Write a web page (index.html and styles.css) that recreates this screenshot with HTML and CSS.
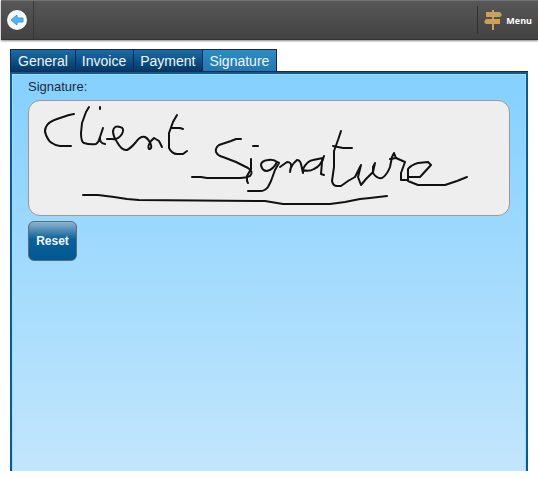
FILE: index.html
```html
<!DOCTYPE html>
<html lang="en">
  <head>
    <meta charset="utf-8" />
    <title>Client Signature</title>
    <meta name="viewport" content="width=device-width, initial-scale=1" />
    <link rel="stylesheet" href="styles.css">
  </head>

  <body>
    <header class="toolbar">
      <button type="button" class="back" aria-label="Back">
        <svg width="20" height="20" viewBox="0 0 20 20">
          <circle cx="10" cy="10" r="10" fill="#f4f8f8" />
          <path d="M4 10 L10 5 V8 H16 V12 H10 V15 Z" fill="#52b4f4" stroke="#3a9be8" stroke-width="1" stroke-linejoin="round" />
        </svg>
      </button>
      <button type="button" class="menu">
        <svg width="18" height="20" viewBox="0 0 18 20">
          <g fill="#cda05a">
            <path d="M8 0 H10 V20 H8 Z" />
            <path d="M2 2 H16 L18 5 L16 7 H2 Z" />
            <path d="M2 9 H16 V14 H2 L0 12 Z" />
          </g>
        </svg>
        Menu
      </button>
    </header>

    <main>
      <nav class="tabs">
        <a href="#general">General</a>
        <a href="#invoice">Invoice</a>
        <a href="#payment">Payment</a>
        <a href="#signature" class="active">Signature</a>
      </nav>

      <section class="panel" id="signature">
        <h2>Signature:</h2>
        <div class="pad">
          <svg viewBox="29 101 480 114" role="img" aria-label="Handwritten client signature">
            <g class="ink">
              <!-- Client -->
              <path d="M74 114 L69 115 L57 119 Q48 122 46 127 Q44 131 46 135 Q49 142 52 143 Q56 146 60 146 H71" />
              <path d="M89 107 L86 112 L82 123 L81 133 Q81 142 84 143 Q90 145 96 144 Q99 142 100 137 L103 128 L100 137 Q99 143 105 144" />
              <path d="M100 107 V109" />
              <path d="M107 139 H112 Q118 140 122 134 Q125 128 120 127 Q114 125 113 131 Q113 136 117 142 Q122 151 127 150 Q131 148 136 142 Q140 136 145 137 Q149 139 151 145 Q152 149 149 149 Q147 147 151 141 L154 138 L159 141 L162 147" />
              <path d="M177 115 L173 122 L169 133 V148 Q172 154 177 154 H183 L187 151" />
              <path d="M172 128 H180 L183 129" />
              <!-- Signature -->
              <path d="M241 139 H236 L231 141 L219 145 Q215 148 216 152 Q218 156 223 157 L236 162 L248 168 Q254 172 250 176 Q246 178 240 178 H207 L201 177 H192" />
              <path d="M251 159 V169 L247 176 V181 L248 183" />
              <path d="M253 146 H258" />
              <path d="M277 162 Q274 159 268 160 Q261 161 261 165 Q262 171 267 171 Q273 170 277 162 L279 163 L275 170 L271 181 L268 187 Q265 191 260 191 H248" />
              <path d="M280 167 L287 162 Q292 162 291 167 L290 172 Q290 166 297 160 Q300 160 301 164 L303 173 L303 169 Q307 161 313 160 L323 158 Q321 166 314 169 Q309 172 303 170" />
              <path d="M324 156 L322 162 L321 174 L324 175" />
              <path d="M341 131 L338 140 L334 151 V167 L332 181 Q333 186 337 186 H341 L348 181 L355 177 L361 165 L358 177 L361 185 L366 179 L373 172 L375 163 L373 167 L373 173 Q377 179 382 178 Q387 175 390 167 L392 157 L394 153 L396 158 L405 162 L401 173 V180 H408 L408 169 Q411 165 418 163 L428 162 L431 165 L420 177 H408 V181 L418 185 H445 L457 181 L467 177" />
              <path d="M390 159 L396 158" />
              <path d="M333 146 L343 148 H352" />
              <path d="M83 195 H98 L114 197 L127 199 L139 200 L265 201 L283 204 H330 L345 202 L360 199 L370 198 L387 196" />
            </g>
          </svg>
        </div>
        <button type="button" class="reset">Reset</button>
      </section>
    </main>
  </body>
</html>
```
FILE: styles.css
```css
*,
*:before,
*:after {
  box-sizing: border-box;
}

body {
  margin: 0;
  min-height: 100vh;
  display: flex;
  flex-direction: column;
  background: #fff;
  color: #1c2a33;
  font-family: "Liberation Sans", Arial, sans-serif;
}

button {
  font-family: inherit;
  cursor: pointer;
}

.toolbar {
  height: 40px;
  display: flex;
  align-items: center;
  justify-content: space-between;
  margin: 0 0 9px 1px;
  background: linear-gradient(#575757, #424242);
  border-top: 1px solid #727272;
  border-bottom: 1px solid #333;
  box-shadow: 0 1px 2px #888;
}

.back,
.menu {
  display: flex;
  align-items: center;
  border: 0;
  background: none;
}

.back {
  height: 100%;
  padding: 0 6px;
  border-right: 1px solid #383838;
}

.menu {
  height: 28px;
  gap: 4px;
  padding: 0 6px;
  border-left: 1px solid #303030;
  color: #fff;
  font-family: "Open Sans", sans-serif;
  font-size: 9px;
  font-weight: bold;
}

main {
  flex: 1;
  display: flex;
  flex-direction: column;
  padding: 0 10px 7px;
}

.tabs {
  display: flex;
  border-bottom: 1px solid #26264c;
}

.tabs a {
  height: 22px;
  padding: 0 7px 0 6px;
  border: 1px solid #12265a;
  border-right: 0;
  border-bottom: 0;
  background: linear-gradient(#1c6ca6, #023868);
  color: #f0f6fa;
  font-size: 14px;
  line-height: 23px;
  text-decoration: none;
}

.tabs a:first-child {
  padding-left: 7px;
}

.tabs a:last-child {
  border-right: 1px solid #12265a;
}

.tabs .active {
  background: linear-gradient(#2c8cc4, #2478b0);
}

.panel {
  flex: 1;
  display: flex;
  flex-direction: column;
  align-items: flex-start;
  padding: 5px 16px;
  border: 2px solid #0a5c90;
  border-bottom: 0;
  background: linear-gradient(#84d0ff, #c2e6fc);
  box-shadow: inset 1px 1px #a4dcfc, inset -1px 0 #a4dcfc;
}

h2 {
  margin: 0 0 5px;
  font-size: 13px;
  font-weight: normal;
  line-height: 16px;
}

.pad {
  width: 100%;
  margin-bottom: 5px;
  border: 1px solid #999;
  border-radius: 12px;
  background: #eee;
}

.pad svg {
  display: block;
  width: 100%;
}

.ink {
  fill: none;
  stroke: #111;
  stroke-width: 2;
  stroke-linecap: round;
  stroke-linejoin: round;
}

.reset {
  width: 49px;
  height: 40px;
  padding: 0;
  border: 1px solid #5c6c78;
  border-radius: 6px;
  background: linear-gradient(#8cb4d0, #0c609a 45%, #005890);
  color: #f0f6fa;
  font-size: 12px;
  font-weight: bold;
}
```
